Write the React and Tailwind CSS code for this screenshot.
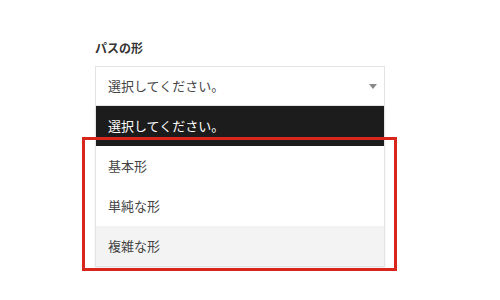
import React from 'react';

const options = ['基本形', '単純な形', '複雑な形'];

export default function App() {
  return (
    <div className="w-[500px] h-[300px] bg-white relative" style={{ fontFamily: '"Noto Sans CJK JP", "Noto Sans", sans-serif' }}>
      <div className="pl-[95px] pt-[39px] w-[385px]">
        <div className="text-[12px] font-bold text-[#333] leading-[18px]">パスの形</div>
        <div className="mt-[9px] h-[40px] border border-[#e3e3e3] flex items-center justify-between pl-[12px] pr-[7px] text-[13px] text-[#444]">
          <span>選択してください。</span>
          <svg width="8" height="5" viewBox="0 0 8 5">
            <path d="M0 0 H8 L4 5 Z" fill="#888" />
          </svg>
        </div>
        {/* opened list */}
        <div className="border-x border-b border-[#e3e3e3] shadow-[0_1px_2px_rgba(0,0,0,0.08)]">
          <div className="h-[40px] bg-[#1c1c1c] text-white text-[13px] flex items-center pl-[12px]">選択してください。</div>
          {options.map((o, i) => (
            <div
              key={o}
              className={`h-[40px] flex items-center pl-[12px] text-[13px] text-[#444] ${i === 2 ? 'bg-[#f3f3f3]' : 'bg-white'}`}
            >
              {o}
            </div>
          ))}
        </div>
      </div>
      {/* annotation */}
      <div className="absolute left-[82px] top-[137px] w-[315px] h-[134px] border-[3px] border-[#d9261c]" />
    </div>
  );
}
